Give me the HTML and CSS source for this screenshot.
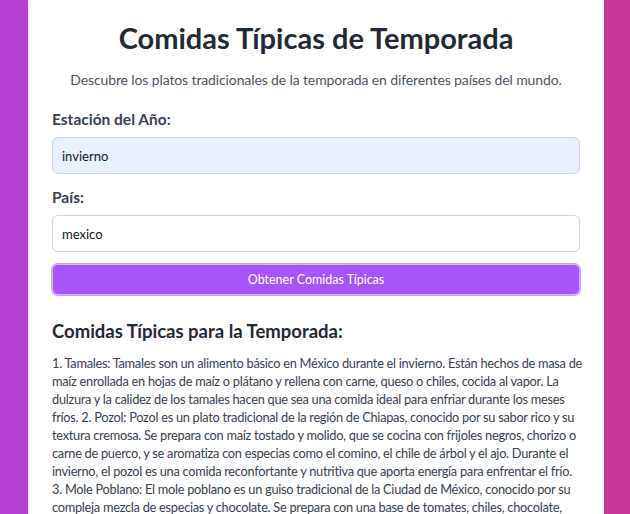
FILE: index.html
```html
<!DOCTYPE html>
<html lang="es">
<head>
<meta charset="utf-8">
<title>Comidas Típicas de Temporada</title>
<link rel="stylesheet" href="styles.css">
</head>
<body>
<main class="card">
  <h1 class="title">Comidas Típicas de Temporada</h1>
  <p class="subtitle">Descubre los platos tradicionales de la temporada en diferentes países del mundo.</p>
  <form class="form">
    <label class="label" for="season">Estación del Año:</label>
    <input class="input input-filled" id="season" type="text" value="invierno">
    <label class="label" for="country">País:</label>
    <input class="input" id="country" type="text" value="mexico">
    <button class="button" type="button">Obtener Comidas Típicas</button>
  </form>
  <section class="results">
    <h2 class="results-title">Comidas Típicas para la Temporada:</h2>
    <p class="results-text">1. Tamales: Tamales son un alimento básico en México durante el invierno. Están hechos de masa de<br>
maíz enrollada en hojas de maíz o plátano y rellena con carne, queso o chiles, cocida al vapor. La<br>
dulzura y la calidez de los tamales hacen que sea una comida ideal para enfriar durante los meses<br>
fríos. 2. Pozol: Pozol es un plato tradicional de la región de Chiapas, conocido por su sabor rico y su<br>
textura cremosa. Se prepara con maíz tostado y molido, que se cocina con frijoles negros, chorizo o<br>
carne de puerco, y se aromatiza con especias como el comino, el chile de árbol y el ajo. Durante el<br>
invierno, el pozol es una comida reconfortante y nutritiva que aporta energía para enfrentar el frío.<br>
3. Mole Poblano: El mole poblano es un guiso tradicional de la Ciudad de México, conocido por su<br>
compleja mezcla de especias y chocolate. Se prepara con una base de tomates, chiles, chocolate,<br>
especias y nueces, y se sirve sobre pollo o carne.</p>
  </section>
</main>
</body>
</html>
```
FILE: styles.css
```css
html, body {
  margin: 0;
  height: 100%;
}
body {
  background: linear-gradient(90deg, #b541d3 0%, #c93596 100%);
  font-family: Lato, "Noto Sans", sans-serif;
  overflow: hidden;
}
.card {
  box-sizing: border-box;
  width: 576px;
  margin: -6px 0 0 28px;
  padding: 24px 24px 24px;
  background: #ffffff;
  border-radius: 8px;
  min-height: 600px;
}
.title {
  margin: 0;
  padding-top: 2px;
  text-align: center;
  font-size: 29px;
  font-weight: 700;
  color: #1f2937;
  line-height: 36px;
}
.subtitle {
  margin: 14px 0 0;
  text-align: center;
  font-size: 14px;
  letter-spacing: -0.12px;
  color: #4b5563;
  line-height: 20px;
}
.form {
  display: flex;
  flex-direction: column;
  margin-top: 18px;
}
.label {
  font-size: 15.5px;
  font-weight: 700;
  color: #374151;
  line-height: 22px;
  margin-bottom: 7px;
}
.input {
  box-sizing: border-box;
  height: 37px;
  padding: 0 9px;
  border: 1px solid #d1d5db;
  border-radius: 6px;
  font-family: inherit;
  font-size: 13px;
  color: #111827;
  background: #ffffff;
  margin-bottom: 12px;
  outline: none;
}
.input-filled {
  background: #e8f0fe;
}
.button {
  height: 31px;
  margin-top: 0;
  border: 1px solid #d8b4fe;
  border-radius: 6px;
  background: #a855f7;
  color: #ffffff;
  font-family: inherit;
  font-size: 12.5px;
  box-shadow: 0 0 0 1px #c4a1f5;
}
.results {
  margin-top: 23px;
}
.results-title {
  margin: 0;
  font-size: 18.5px;
  font-weight: 700;
  color: #1f2937;
  line-height: 26px;
}
.results-text {
  margin: 10px 0 0;
  font-size: 12.8px;
  letter-spacing: -0.28px;
  line-height: 18px;
  white-space: nowrap;
  color: #374151;
}
```
